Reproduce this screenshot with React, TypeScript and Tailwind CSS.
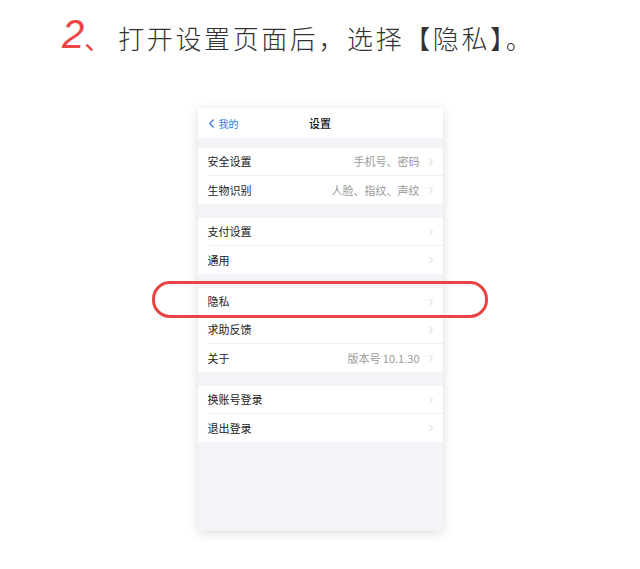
import { ChevronLeft, ChevronRight } from 'lucide-react';

type Row = { label: string; value?: string };

const groups: Row[][] = [
  [
    { label: '安全设置', value: '手机号、密码' },
    { label: '生物识别', value: '人脸、指纹、声纹' },
  ],
  [{ label: '支付设置' }, { label: '通用' }],
  [{ label: '隐私' }, { label: '求助反馈' }, { label: '关于', value: '版本号 10.1.30' }],
  [{ label: '换账号登录' }, { label: '退出登录' }],
];

const font = { fontFamily: '"Noto Sans CJK SC", "Liberation Sans", sans-serif' };

function SettingRow({ row, last }: { row: Row; last: boolean }) {
  return (
    <div className="flex h-[28px] items-center bg-white pl-[10px]">
      <div
        className={`flex h-full flex-1 items-center justify-between pr-[6px] ${
          last ? '' : 'border-b border-[#eeeef0]'
        }`}
      >
        <span className="text-[11px] text-[#222]">{row.label}</span>
        <span className="flex items-center gap-[5px] text-[11px] text-[#9a9a9a]">
          {row.value}
          <ChevronRight className="h-[12px] w-[12px] text-[#c4c4c8]" strokeWidth={1.6} />
        </span>
      </div>
    </div>
  );
}

export default function App() {
  return (
    <div className="relative h-[569px] w-[640px] bg-white" style={font}>
      <div className="flex items-end pl-[62px] pt-[12px]">
        <span
          className="text-[40px] leading-[44px] text-[#ee4444]"
          style={{ fontFamily: '"Liberation Sans", sans-serif', fontStyle: 'italic' }}
        >
          2
        </span>
        <span className="mb-[2px] text-[26px] leading-[30px] text-[#ee4444]">、</span>
        <span className="ml-[8px] mb-[3px] text-[26px] font-light leading-[30px] tracking-[2.6px] text-[#333]">
          打开设置页面后，选择【隐私】。
        </span>
      </div>

      <div className="mx-auto mt-[52px] flex h-[423px] w-[245px] flex-col bg-[#f4f4f8] shadow-[0_2px_10px_rgba(0,0,0,0.14)]">
        <div className="relative flex h-[30px] items-center justify-center bg-white">
          <span className="absolute left-[6px] flex items-center text-[10px] text-[#2f7de1]">
            <ChevronLeft className="h-[15px] w-[15px]" strokeWidth={1.8} />
            我的
          </span>
          <span className="text-[11px] font-medium text-[#111]">设置</span>
        </div>
        <div className="flex flex-col gap-[14px] pt-[10px]">
          {groups.map((g, gi) => (
            <div key={gi} className="flex flex-col">
              {g.map((r, ri) => (
                <SettingRow key={r.label} row={r} last={ri === g.length - 1} />
              ))}
            </div>
          ))}
        </div>
      </div>

      <div className="absolute left-[152px] top-[281px] h-[37px] w-[336px] rounded-[18px] border-[3px] border-[#e84444]" />
    </div>
  );
}
